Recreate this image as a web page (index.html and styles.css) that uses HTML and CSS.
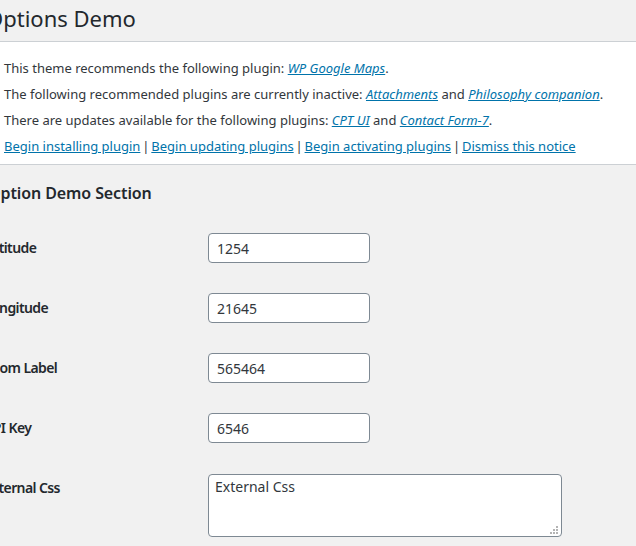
FILE: index.html
```html
<!DOCTYPE html>
<html lang="en">
<head>
<meta charset="utf-8">
<title>Options Demo</title>
<link rel="stylesheet" href="styles.css">
</head>
<body>
<div class="wrap">
  <h1 class="page-title">Options Demo</h1>
  <div class="notice">
    <p>This theme recommends the following plugin: <a href="#"><em>WP Google Maps</em></a>.</p>
    <p>The following recommended plugins are currently inactive: <a href="#"><em>Attachments</em></a> and <a href="#"><em>Philosophy companion</em></a>.</p>
    <p>There are updates available for the following plugins: <a href="#"><em>CPT UI</em></a> and <a href="#"><em>Contact Form-7</em></a>.</p>
    <p><a href="#">Begin installing plugin</a><span class="sep"> | </span><a href="#">Begin updating plugins</a><span class="sep"> | </span><a href="#">Begin activating plugins</a><span class="sep"> | </span><a href="#">Dismiss this notice</a></p>
  </div>
  <h2 class="section-title">Option Demo Section</h2>
  <div class="form-table">
    <div class="row"><label class="th">Latitude</label><div class="td"><input class="text" type="text" value="1254"></div></div>
    <div class="row"><label class="th">Longitude</label><div class="td"><input class="text" type="text" value="21645"></div></div>
    <div class="row"><label class="th">Zoom Label</label><div class="td"><input class="text" type="text" value="565464"></div></div>
    <div class="row"><label class="th">API Key</label><div class="td"><input class="text" type="text" value="6546"></div></div>
    <div class="row"><label class="th">External Css</label><div class="td"><div class="area-box"><textarea class="area">External Css</textarea><svg class="grip" width="8" height="8" viewBox="0 0 8 8"><rect x="6" y="0" width="2" height="2"/><rect x="3" y="3" width="2" height="2"/><rect x="6" y="3" width="2" height="2"/><rect x="0" y="6" width="2" height="2"/><rect x="3" y="6" width="2" height="2"/><rect x="6" y="6" width="2" height="2"/></svg></div></div></div>
  </div>
</div>
</body>
</html>
```
FILE: styles.css
```css
html, body {
  margin: 0;
  padding: 0;
  background: #f1f1f1;
  color: #444;
  font-family: "Noto Sans", "Open Sans", sans-serif;
  font-size: 13px;
  overflow: hidden;
}
.wrap {
  margin-left: -12px;
}
.page-title {
  margin: 0 0 5px -2px;
  font-size: 22px;
  font-weight: 400;
  line-height: 36px;
  color: #23282d;
}
.notice {
  background: #fff;
  border-top: 1px solid #ccd0d4;
  border-bottom: 1px solid #ccd0d4;
  border-left: 4px solid #00a0d2;
  padding: 10px 12px 2px;
  margin-right: -20px;
}
.notice p {
  margin: 6px 0;
  line-height: 20px;
  color: #32373c;
}
.notice a {
  color: #0073aa;
  text-decoration: underline;
}
.sep {
  margin: 0 -1.5px;
}
.section-title {
  margin: 16px 0 13px;
  font-size: 16px;
  font-weight: 600;
  line-height: 24px;
  color: #23282d;
  letter-spacing: -0.1px;
}
.row {
  display: flex;
  align-items: flex-start;
}
.th {
  width: 200px;
  padding: 20px 10px 20px 0;
  font-size: 14px;
  font-weight: 600;
  line-height: 20px;
  letter-spacing: -0.6px;
  text-indent: -4px;
  color: #23282d;
}
.td {
  padding: 15px 10px;
}
.text, .area {
  box-sizing: border-box;
  border: 1px solid #7e8993;
  border-radius: 4px;
  background: #fff;
  color: #32373c;
  font-family: "Noto Sans", "Open Sans", sans-serif;
  font-size: 14px;
  margin: 0;
}
.text {
  width: 162px;
  height: 30px;
  padding: 0 8px;
  line-height: 28px;
}
.area-box {
  position: relative;
  margin-top: 1px;
  width: 354px;
  height: 63px;
}
.area {
  display: block;
  width: 354px;
  height: 63px;
  padding: 2px 6px;
  line-height: 20px;
  resize: none;
}
.grip {
  position: absolute;
  right: 4px;
  bottom: 3px;
  fill: #b4b4b4;
}
```
